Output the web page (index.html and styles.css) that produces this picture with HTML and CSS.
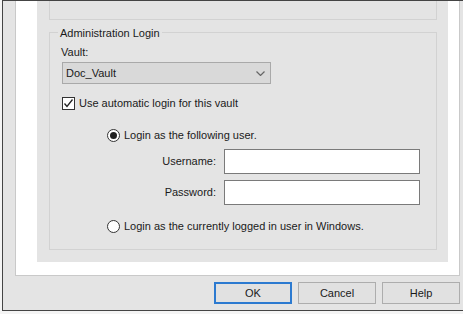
FILE: index.html
```html
<!DOCTYPE html>
<html>
<head>
<meta charset="utf-8">
<link rel="stylesheet" href="styles.css">
</head>
<body>
<div class="dialog">
  <div class="page">
    <div class="panel">
      <div class="prev-box"></div>
      <div class="group">
        <div class="group-title">Administration Login</div>
        <div class="vault-label">Vault:</div>
        <div class="combo">
          <span class="combo-text">Doc_Vault</span>
          <svg class="chevron" width="9" height="5" viewBox="0 0 9 5"><polyline points="0.5,0.5 4.5,4.5 8.5,0.5" fill="none" stroke="#666" stroke-width="1.2"/></svg>
        </div>
        <div class="check-row">
          <span class="checkbox"><svg width="11" height="11" viewBox="0 0 11 11"><polyline points="1.5,5.5 4,8.5 9.5,1.5" fill="none" stroke="#222" stroke-width="1.3"/></svg></span>
          <span>Use automatic login for this vault</span>
        </div>
        <div class="radio-row first">
          <span class="radio checked"></span>
          <span>Login as the following user.</span>
        </div>
        <div class="cred-grid">
          <span class="cred-label">Username:</span>
          <span class="textbox"></span>
          <span class="cred-label">Password:</span>
          <span class="textbox"></span>
        </div>
        <div class="radio-row second">
          <span class="radio"></span>
          <span>Login as the currently logged in user in Windows.</span>
        </div>
      </div>
    </div>
  </div>
  <div class="buttons">
    <span class="btn default">OK</span>
    <span class="btn">Cancel</span>
    <span class="btn">Help</span>
  </div>
</div>
</body>
</html>
```

FILE: styles.css
```css
html, body {
  margin: 0;
  padding: 0;
  overflow: hidden;
  background: #f4f4f4;
}
body {
  font-family: "Liberation Sans", Arial, sans-serif;
  font-size: 11px;
  line-height: 13px;
  color: #1a1a1a;
}
.dialog {
  margin-left: 2px;
  width: 448px;
  background: #e4e4e4;
  border-top: 1px solid #444;
  border-left: 1px solid #444;
  border-bottom: 1px solid #444;
  padding-left: 12px;
}
.page {
  background: #fff;
  border: 1px solid #c9c9c9;
  border-top: none;
  padding: 0 11px 13px 21px;
  box-sizing: border-box;
  width: 445px;
}
.panel {
  background: #e4e4e4;
  padding: 0 11px 12px 12px;
}
.prev-box {
  height: 18px;
  border: 1px solid #d2d2d2;
  border-top: none;
  margin-bottom: 12px;
}
.group {
  border: 1px solid #d2d2d2;
  padding: 0 0 16px 11px;
}
.group-title {
  margin: -6px 0 0 -3px;
  padding: 0 2px;
  width: fit-content;
  background: #e4e4e4;
}
.vault-label {
  margin-top: 6px;
}
.combo {
  margin: 3px 0 0 1px;
  width: 209px;
  height: 22px;
  box-sizing: border-box;
  border: 1px solid #a9a9a9;
  background: #d9d9d9;
  display: flex;
  align-items: center;
  justify-content: space-between;
  padding: 0 3px 0 3px;
}
.chevron {
  margin-right: 2px;
}
.check-row, .radio-row {
  display: flex;
  align-items: center;
  height: 13px;
}
.check-row {
  margin: 13px 0 0 1px;
  gap: 4px;
}
.checkbox {
  width: 13px;
  height: 13px;
  box-sizing: border-box;
  border: 1px solid #333;
  background: #fff;
  display: flex;
  align-items: center;
  justify-content: center;
}
.radio-row {
  margin-left: 46px;
  gap: 4px;
}
.radio-row.first {
  margin-top: 19px;
}
.radio-row.second {
  margin-top: 15px;
}
.radio {
  width: 13px;
  height: 13px;
  box-sizing: border-box;
  border: 1px solid #333;
  border-radius: 50%;
  background: #fff;
  display: flex;
  align-items: center;
  justify-content: center;
}
.radio.checked::after {
  content: "";
  width: 7px;
  height: 7px;
  border-radius: 50%;
  background: #222;
}
.cred-grid {
  display: grid;
  grid-template-columns: 155px 196px;
  column-gap: 8px;
  row-gap: 6px;
  margin-top: 7px;
  align-items: center;
}
.cred-label {
  text-align: right;
}
.textbox {
  height: 25px;
  box-sizing: border-box;
  border: 1px solid #7a7a7a;
  background: #fff;
}
.buttons {
  width: 445px;
  display: flex;
  justify-content: flex-end;
  gap: 6px;
  margin-top: 6px;
  padding-bottom: 6px;
}
.btn {
  width: 78px;
  height: 22px;
  box-sizing: border-box;
  border: 1px solid #adadad;
  background: #e1e1e1;
  display: flex;
  align-items: center;
  justify-content: center;
}
.btn.default {
  border: 2px solid #2c7ad0;
}
```
